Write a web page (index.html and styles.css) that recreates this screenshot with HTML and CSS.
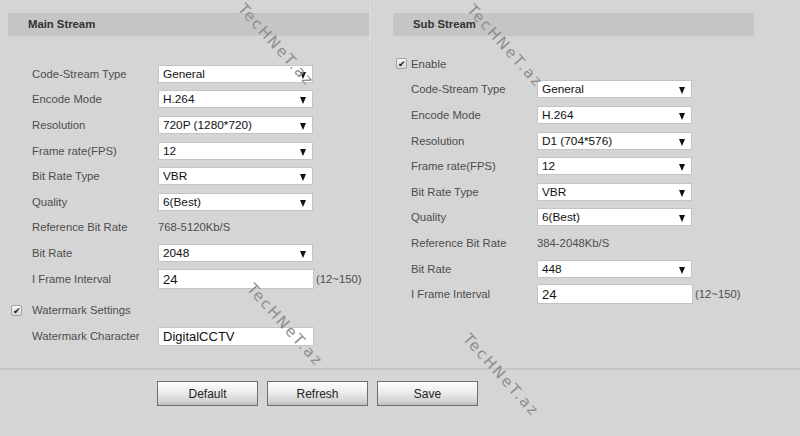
FILE: index.html
```html
<!DOCTYPE html>
<html>
<head>
  <title>Encode</title>
  <link rel="stylesheet" href="styles.css">
</head>
<body>
<div class="page">
  <div class="streams">
    <!-- main stream -->
    <section class="panel main-panel">
      <div class="panel-head">Main Stream</div>
      <div class="rows main-rows">
        <div class="row"><span class="label">Code-Stream Type</span><div class="select">General<span class="arrow"></span></div></div>
        <div class="row"><span class="label">Encode Mode</span><div class="select">H.264<span class="arrow"></span></div></div>
        <div class="row"><span class="label">Resolution</span><div class="select">720P (1280*720)<span class="arrow"></span></div></div>
        <div class="row"><span class="label">Frame rate(FPS)</span><div class="select">12<span class="arrow"></span></div></div>
        <div class="row"><span class="label">Bit Rate Type</span><div class="select">VBR<span class="arrow"></span></div></div>
        <div class="row"><span class="label">Quality</span><div class="select">6(Best)<span class="arrow"></span></div></div>
        <div class="row"><span class="label">Reference Bit Rate</span><span class="value">768-5120Kb/S</span></div>
        <div class="row"><span class="label">Bit Rate</span><div class="select">2048<span class="arrow"></span></div></div>
        <div class="row"><span class="label">I Frame Interval</span><div class="text-input">24</div><span class="range">(12~150)</span></div>
        <div class="row check-row wm-check"><span class="checkbox">&#10004;</span>Watermark Settings</div>
        <div class="row wm-row"><span class="label">Watermark Character</span><div class="text-input wm-input">DigitalCCTV</div></div>
      </div>
    </section>

    <!-- sub stream -->
    <section class="panel sub-panel">
      <div class="panel-head">Sub Stream</div>
      <div class="rows sub-rows">
        <div class="row check-row enable"><span class="checkbox">&#10004;</span>Enable</div>
        <div class="row"><span class="label">Code-Stream Type</span><div class="select">General<span class="arrow"></span></div></div>
        <div class="row"><span class="label">Encode Mode</span><div class="select">H.264<span class="arrow"></span></div></div>
        <div class="row"><span class="label">Resolution</span><div class="select">D1 (704*576)<span class="arrow"></span></div></div>
        <div class="row"><span class="label">Frame rate(FPS)</span><div class="select">12<span class="arrow"></span></div></div>
        <div class="row"><span class="label">Bit Rate Type</span><div class="select">VBR<span class="arrow"></span></div></div>
        <div class="row"><span class="label">Quality</span><div class="select">6(Best)<span class="arrow"></span></div></div>
        <div class="row"><span class="label">Reference Bit Rate</span><span class="value">384-2048Kb/S</span></div>
        <div class="row"><span class="label">Bit Rate</span><div class="select">448<span class="arrow"></span></div></div>
        <div class="row"><span class="label">I Frame Interval</span><div class="text-input">24</div><span class="range">(12~150)</span></div>
      </div>
    </section>
  </div>

  <div class="footer">
    <button class="btn">Default</button>
    <button class="btn">Refresh</button>
    <button class="btn">Save</button>
  </div>

  <!-- site watermarks over the screenshot -->
  <div class="mark m1">TecHNeT.az</div>
  <div class="mark m2">TecHNeT.az</div>
  <div class="mark m3">TecHNeT.az</div>
  <div class="mark m4">TecHNeT.az</div>
</div>
</body>
</html>
```

FILE: styles.css
```css
* {
	box-sizing: border-box;
}

body {
	margin: 0;
	background-color: #d5d5d5;
	font-family: "Liberation Sans", Arial, sans-serif;
	font-size: 11.3px;
	color: #4d4d4d;
}

.page {
	position: relative;
	width: 800px;
	height: 436px;
	overflow: hidden;
}

.streams {
	display: flex;
	height: 368px;
}

.panel {
	height: 100%;
}

.main-panel {
	width: 371px;
	padding-left: 8px;
	border-right: 1px solid #dedede;
	box-shadow: 1px 0 0 #d0d0d0;
}

.sub-panel {
	padding-left: 22px;
}

.panel-head {
	width: 361px;
	height: 23px;
	margin-top: 13px;
	padding-left: 20px;
	line-height: 23px;
	background-color: #c5c5c5;
	font-weight: bold;
	color: #333;
}

.rows {
	display: flex;
	flex-direction: column;
}

.main-rows {
	margin-top: 25px;
	padding-left: 24px;
}

.sub-rows {
	margin-top: 15px;
	padding-left: 18px;
}

.row {
	display: flex;
	align-items: center;
	height: 25.6px;
}

.label {
	width: 126px;
	flex: none;
}

.value {
	color: #4d4d4d;
}

.select {
	position: relative;
	width: 155px;
	height: 18px;
	padding-left: 4px;
	line-height: 17px;
	background-color: #fff;
	border: 1px solid #c4c4c4;
	color: #111;
	font-size: 11.8px;
}

.arrow {
	position: absolute;
	right: 6px;
	top: 6px;
	width: 0;
	height: 0;
	border-left: 3.5px solid transparent;
	border-right: 3.5px solid transparent;
	border-top: 7px solid #111;
}

.text-input {
	width: 156px;
	height: 20px;
	padding-left: 4px;
	line-height: 19px;
	background-color: #fff;
	border: 1px solid #c4c4c4;
	color: #111;
	font-size: 13px;
}

.range {
	margin-left: 2px;
}

.check-row {
	padding-left: 3px;
}

.main-rows .check-row {
	margin-left: -24px;
}

.sub-rows .check-row {
	margin-left: -18px;
}

.wm-check {
	margin-top: 6px;
}

.wm-row {
	height: 27px;
}

.wm-input {
	height: 19px;
	line-height: 18px;
}

.checkbox {
	width: 11px;
	height: 11px;
	margin-right: 10px;
	border: 1px solid #a3a3a3;
	border-radius: 2px;
	background: linear-gradient(#f6f6f6, #d9d9d9);
	font-size: 9px;
	line-height: 10px;
	text-align: center;
	color: #222;
}

.enable .checkbox {
	margin-right: 4px;
}

.footer {
	display: flex;
	gap: 9px;
	padding-left: 157px;
	padding-top: 12px;
	border-top: 1px solid #c3c3c3;
	box-shadow: inset 0 1px 2px rgba(0, 0, 0, 0.06);
}

.btn {
	width: 101px;
	height: 25px;
	border: 1px solid #6e6e6e;
	background: linear-gradient(#fefefe, #ececec 45%, #d2d2d2 85%, #bdbdbd);
	font-family: "Liberation Sans", Arial, sans-serif;
	font-size: 12px;
	color: #222;
	padding: 0;
}

.mark {
	position: absolute;
	transform-origin: 0 50%;
	transform: rotate(48deg);
	font-family: "DejaVu Sans", sans-serif;
	font-size: 15px;
	letter-spacing: 2px;
	color: #8e8e8e;
	white-space: nowrap;
}

.m1 {
	left: 241px;
	top: -3px;
}

.m2 {
	left: 470px;
	top: -2px;
}

.m3 {
	left: 250px;
	top: 277px;
}

.m4 {
	left: 466px;
	top: 327px;
}
```
